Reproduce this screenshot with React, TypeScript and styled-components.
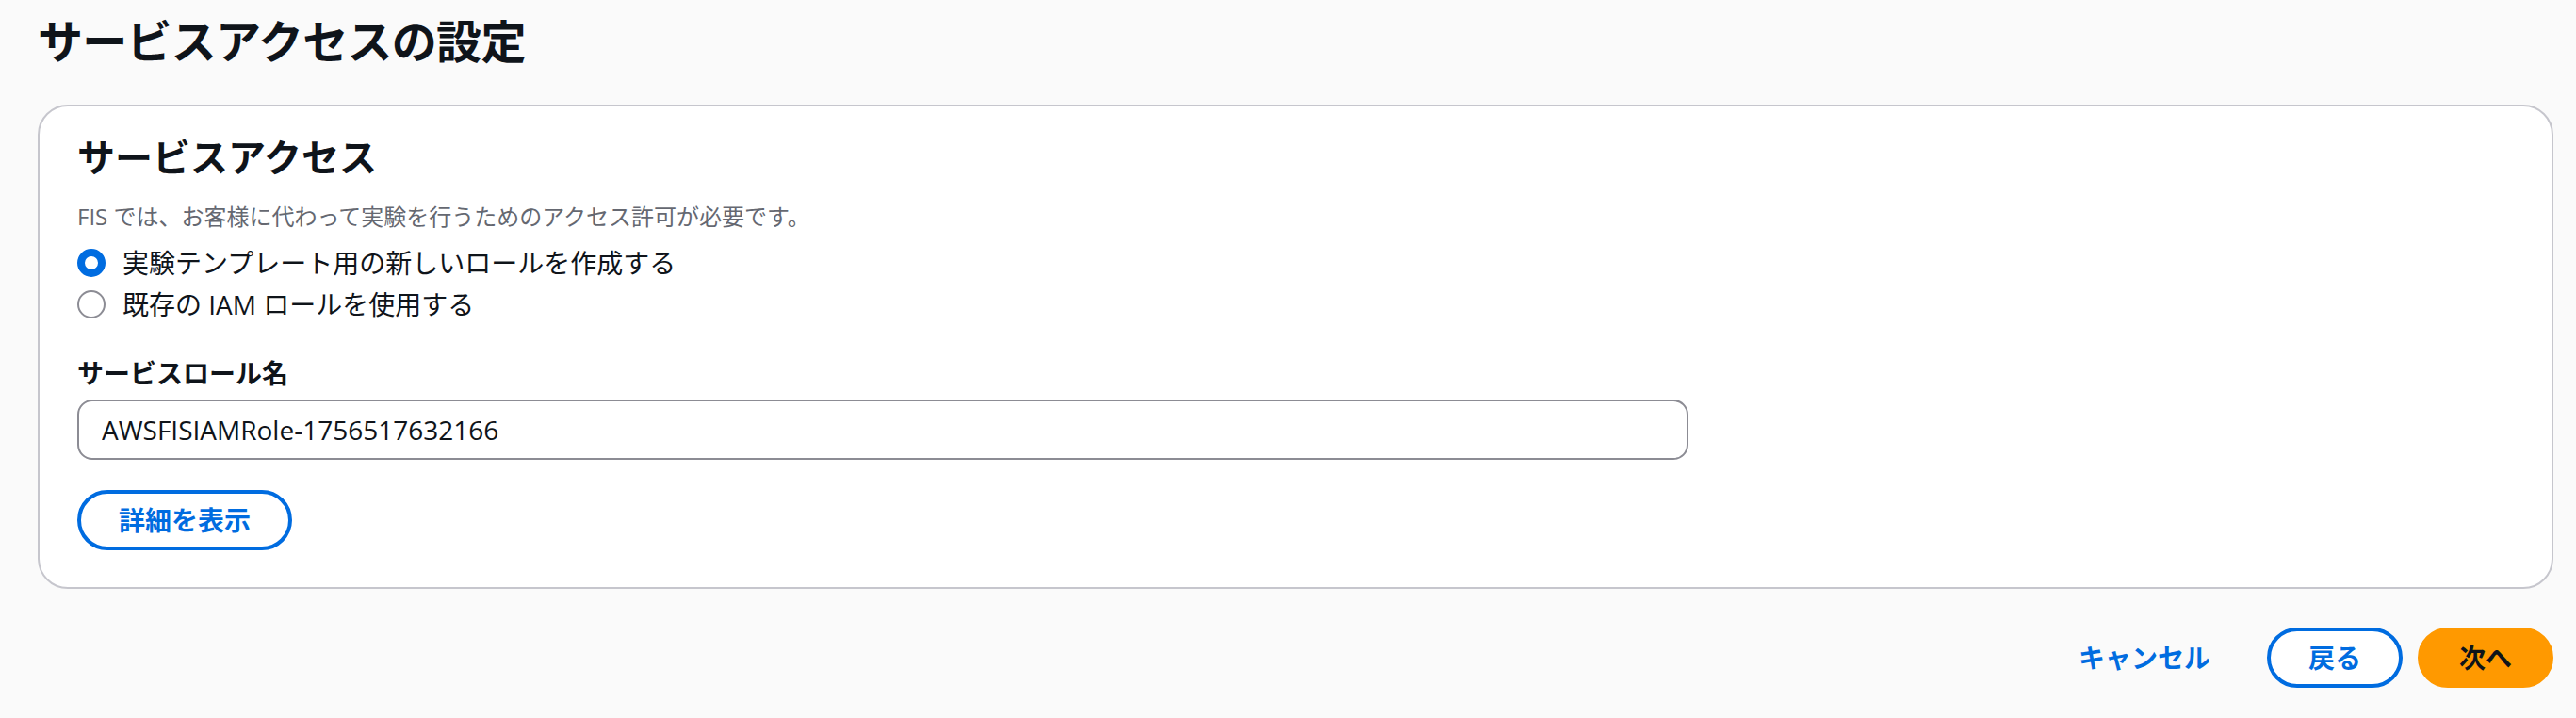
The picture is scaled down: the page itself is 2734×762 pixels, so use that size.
import React from "react";
import styled, { createGlobalStyle } from "styled-components";

const GlobalStyle = createGlobalStyle`
  html, body {
    margin: 0;
    padding: 0;
    background: #fafafa;
  }
  body {
    font-family: "Open Sans", "Noto Sans CJK JP", sans-serif;
    color: #0f141a;
  }
  * {
    box-sizing: border-box;
  }
`;

function App() {
  return (
    <Page>
      <GlobalStyle />
      <PageTitle>サービスアクセスの設定</PageTitle>

      <Card>
        <CardTitle>サービスアクセス</CardTitle>
        <Description>
          FIS では、お客様に代わって実験を行うためのアクセス許可が必要です。
        </Description>

        <RadioGroup>
          <RadioRow>
            <RadioCircle $checked />
            <span>実験テンプレート用の新しいロールを作成する</span>
          </RadioRow>
          <RadioRow>
            <RadioCircle />
            <span>既存の IAM ロールを使用する</span>
          </RadioRow>
        </RadioGroup>

        <FieldLabel>サービスロール名</FieldLabel>
        <TextInput readOnly defaultValue="AWSFISIAMRole-1756517632166" />

        <DetailsRow>
          <Button $variant="normal">詳細を表示</Button>
        </DetailsRow>
      </Card>

      <Footer>
        <Button $variant="link">キャンセル</Button>
        <Button $variant="normal">戻る</Button>
        <Button $variant="primary">次へ</Button>
      </Footer>
    </Page>
  );
}

export default App;

const Page = styled.div`
  min-height: 762px;
  padding: 14px 24px 0 40px;
  background: #fafafa;
`;

const PageTitle = styled.h1`
  margin: 0;
  font-size: 48px;
  line-height: 60px;
  font-weight: 700;
  letter-spacing: -0.015em;
`;

const Card = styled.section`
  margin-top: 37px;
  background: #ffffff;
  border: 2px solid #c6c6cd;
  border-radius: 32px;
  padding: 30px 40px 39px;
`;

const CardTitle = styled.h2`
  margin: 0;
  font-size: 40px;
  line-height: 48px;
  font-weight: 700;
`;

const Description = styled.p`
  margin: 23px 0 0;
  font-size: 24px;
  line-height: 32px;
  color: #656871;
`;

const RadioGroup = styled.div`
  display: flex;
  flex-direction: column;
  gap: 4px;
  margin-top: 13px;
`;

const RadioRow = styled.label`
  display: flex;
  align-items: center;
  gap: 18px;
  font-size: 28px;
  line-height: 40px;
`;

const RadioCircle = styled.span<{ $checked?: boolean }>`
  flex: none;
  width: 30px;
  height: 30px;
  border-radius: 50%;
  background: #ffffff;
  border: ${(p) => (p.$checked ? "8px solid #006ce0" : "2px solid #8c8c94")};
`;

const FieldLabel = styled.div`
  margin-top: 33px;
  font-size: 28px;
  line-height: 40px;
  font-weight: 700;
`;

const TextInput = styled.input`
  display: block;
  margin-top: 8px;
  width: 1710px;
  height: 64px;
  padding: 8px 24px;
  border: 2px solid #8c8c94;
  border-radius: 16px;
  background: #ffffff;
  font-family: inherit;
  font-size: 28px;
  line-height: 44px;
  color: #0f141a;
  outline: none;
`;

const DetailsRow = styled.div`
  display: flex;
  margin-top: 32px;
`;

const Button = styled.button<{ $variant: "normal" | "primary" | "link" }>`
  height: 64px;
  padding: 8px 40px;
  border-radius: 40px;
  font-family: inherit;
  font-size: 28px;
  line-height: 40px;
  font-weight: 700;
  cursor: pointer;
  border: 4px solid
    ${(p) =>
      p.$variant === "normal"
        ? "#006ce0"
        : p.$variant === "primary"
        ? "#ff9900"
        : "transparent"};
  background: ${(p) =>
    p.$variant === "primary"
      ? "#ff9900"
      : p.$variant === "normal"
      ? "#ffffff"
      : "transparent"};
  color: ${(p) => (p.$variant === "primary" ? "#0f141a" : "#006ce0")};
`;

const Footer = styled.div`
  display: flex;
  justify-content: flex-end;
  gap: 16px;
  margin-top: 41px;
`;
